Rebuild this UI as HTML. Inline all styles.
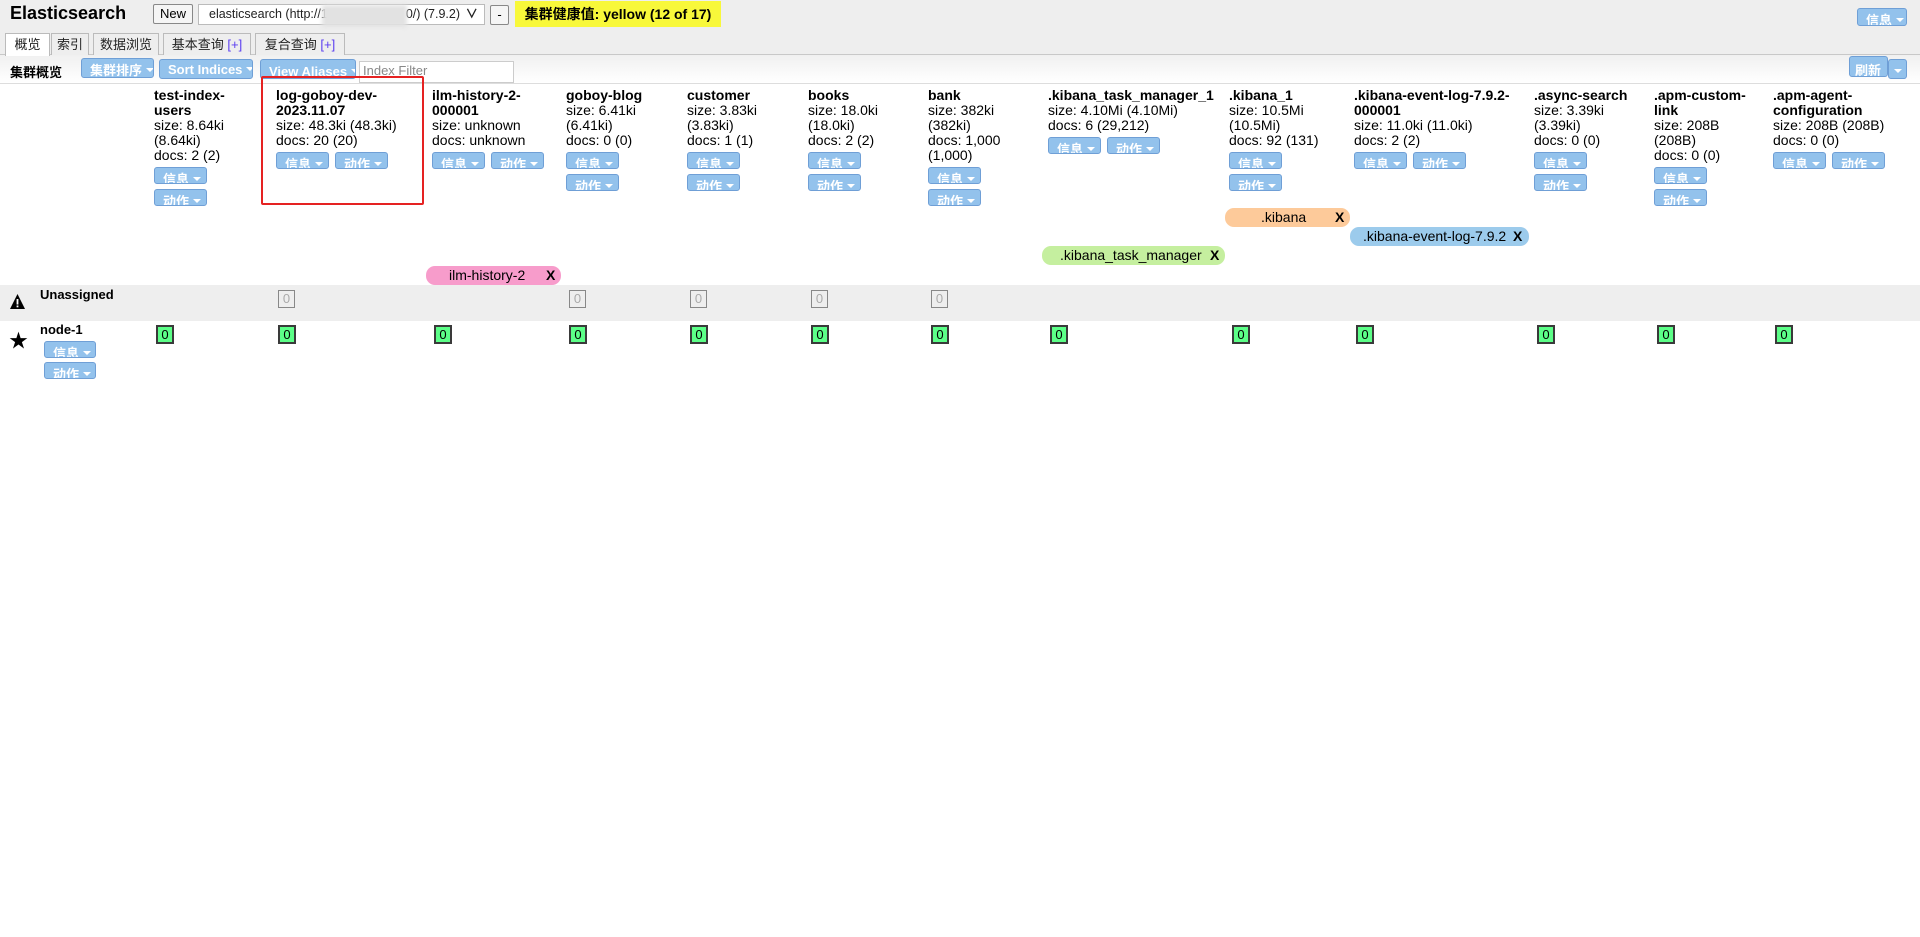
<!DOCTYPE html>
<html><head><meta charset="utf-8">
<style>
*{box-sizing:border-box;margin:0;padding:0}
body{width:1920px;height:937px;background:#fff;font-family:"Liberation Sans","Noto Sans CJK SC",sans-serif;font-size:14px;color:#000;position:relative;overflow:hidden}
.abs{position:absolute}
#hdr{left:0;top:0;width:1920px;height:55px;background:#eee;border-bottom:1px solid #c8c8c8}
#bar{left:0;top:55px;width:1920px;height:29px;background:linear-gradient(#f0f0f0,#fff);border-bottom:1px solid #ddd}
.gb{position:absolute;background:#f5f5f5;border:1px solid #888;border-radius:2px;font-size:13px;text-align:center;line-height:18px}
.tab{position:absolute;top:33px;height:22px;border:1px solid #bbb;border-bottom:none;background:#eee;font-size:13px;line-height:22px;text-align:center;color:#222}
.tab b{font-weight:normal;color:#5a3cf0}
.btn{position:absolute;height:17px;background:#93c2ec;border:1px solid #6f9fd6;border-radius:3px;color:#fff;font-size:13px;font-weight:bold;overflow:hidden;line-height:23px;padding-left:8px;white-space:nowrap}
.btn i{display:inline-block;width:0;height:0;border-left:4px solid transparent;border-right:4px solid transparent;border-top:4px solid #fff;vertical-align:3px;margin-left:4px}
.col{position:absolute;top:88px;line-height:15px;white-space:nowrap}
.col b{font-weight:bold}
.col .b{position:relative;display:block;height:17px;width:53px;margin-top:4px;background:#93c2ec;border:1px solid #6f9fd6;border-radius:3px;color:#fff;font-size:13px;font-weight:bold;overflow:hidden;line-height:23px;padding-left:8px}
.col .b+.b{margin-top:5px}
.col .row{display:flex;gap:6px;margin-top:4px}
.col .row .b{margin-top:0}
.b i{display:inline-block;width:0;height:0;border-left:4px solid transparent;border-right:4px solid transparent;border-top:4px solid #fff;vertical-align:3px;margin-left:4px}
.ua{position:absolute;top:290px;width:17px;height:18px;border:1px solid #888;color:#aaa;font-size:13px;text-align:center;line-height:16px}
.sh{position:absolute;top:325px;width:18px;height:19px;border:2px solid #3a3a3a;background:#5cff88;font-size:13px;text-align:center;line-height:15px}
.al{position:absolute;height:19px;border-radius:9px;font-size:14px;line-height:19px;white-space:nowrap}
.al span{position:absolute}
.al b{position:absolute;font-weight:bold}
</style></head><body>
<div id="hdr" class="abs"></div>
<div id="bar" class="abs"></div>
<div class="abs" style="left:10px;top:3px;font-size:18px;font-weight:bold">Elasticsearch</div>
<div class="gb" style="left:153px;top:4px;width:40px;height:20px;">New</div>
<div class="abs" style="left:198px;top:4px;width:287px;height:21px;background:#fff;border:1px solid #bbb;font-size:12.5px;line-height:19px;padding-left:10px;color:#222;white-space:nowrap">elasticsearch (http://1<span style="display:inline-block;width:78px"></span>0/) (7.9.2)<span style="position:absolute;right:6px;top:0;font-weight:bold">&#x2228;</span></div>
<div class="abs" style="left:322px;top:5px;width:85px;height:22px;background:#e2e2e2;filter:blur(2px)"></div>
<div class="gb" style="left:490px;top:5px;width:19px;height:20px;">-</div>
<div class="abs" style="left:515px;top:1px;width:206px;height:26px;background:#f8f83a;font-weight:bold;font-size:14px;line-height:26px;text-align:center">集群健康值: yellow (12 of 17)</div>
<div class="btn" style="left:1857px;top:8px;width:50px;height:18px">信息<i></i></div>

<div class="tab" style="left:5px;width:45px;background:#fff;height:23px">概览</div>
<div class="tab" style="left:51px;width:38px">索引</div>
<div class="tab" style="left:93px;width:66px">数据浏览</div>
<div class="tab" style="left:163px;width:88px">基本查询 <b>[+]</b></div>
<div class="tab" style="left:255px;width:90px">复合查询 <b>[+]</b></div>

<div class="abs" style="left:10px;top:62px;font-weight:bold;font-size:13px">集群概览</div>
<div class="btn" style="left:81px;top:58px;width:73px;height:20px;line-height:24px">集群排序<i></i></div>
<div class="btn" style="left:159px;top:59px;width:94px;height:20px;line-height:20px">Sort Indices<i></i></div>
<div class="btn" style="left:260px;top:59px;width:96px;height:20px;line-height:24px">View Aliases<i></i></div>
<div class="abs" style="left:359px;top:61px;width:155px;height:22px;background:#fff;border:1px solid #ccc;color:#888;font-size:13px;line-height:18px;padding-left:3px">Index Filter</div>
<div class="btn" style="left:1849px;top:56px;width:39px;height:21px;line-height:27px;padding-left:5px">刷新</div>
<div class="btn" style="left:1888px;top:59px;width:19px;height:20px;padding-left:5px"><i style="margin-left:0"></i></div>

<div class="col" style="left:154px"><b>test-index-<br>users</b><br>size: 8.64ki<br>(8.64ki)<br>docs: 2 (2)<div class="b">信息<i></i></div><div class="b">动作<i></i></div></div>
<div class="col" style="left:276px"><b>log-goboy-dev-<br>2023.11.07</b><br>size: 48.3ki (48.3ki)<br>docs: 20 (20)<div class="row"><div class="b">信息<i></i></div><div class="b">动作<i></i></div></div></div>
<div class="col" style="left:432px"><b>ilm-history-2-<br>000001</b><br>size: unknown<br>docs: unknown<div class="row"><div class="b">信息<i></i></div><div class="b">动作<i></i></div></div></div>
<div class="col" style="left:566px"><b>goboy-blog</b><br>size: 6.41ki<br>(6.41ki)<br>docs: 0 (0)<div class="b">信息<i></i></div><div class="b">动作<i></i></div></div>
<div class="col" style="left:687px"><b>customer</b><br>size: 3.83ki<br>(3.83ki)<br>docs: 1 (1)<div class="b">信息<i></i></div><div class="b">动作<i></i></div></div>
<div class="col" style="left:808px"><b>books</b><br>size: 18.0ki<br>(18.0ki)<br>docs: 2 (2)<div class="b">信息<i></i></div><div class="b">动作<i></i></div></div>
<div class="col" style="left:928px"><b>bank</b><br>size: 382ki<br>(382ki)<br>docs: 1,000<br>(1,000)<div class="b">信息<i></i></div><div class="b">动作<i></i></div></div>
<div class="col" style="left:1048px"><b>.kibana_task_manager_1</b><br>size: 4.10Mi (4.10Mi)<br>docs: 6 (29,212)<div class="row"><div class="b">信息<i></i></div><div class="b">动作<i></i></div></div></div>
<div class="col" style="left:1229px"><b>.kibana_1</b><br>size: 10.5Mi<br>(10.5Mi)<br>docs: 92 (131)<div class="b">信息<i></i></div><div class="b">动作<i></i></div></div>
<div class="col" style="left:1354px"><b>.kibana-event-log-7.9.2-<br>000001</b><br>size: 11.0ki (11.0ki)<br>docs: 2 (2)<div class="row"><div class="b">信息<i></i></div><div class="b">动作<i></i></div></div></div>
<div class="col" style="left:1534px"><b>.async-search</b><br>size: 3.39ki<br>(3.39ki)<br>docs: 0 (0)<div class="b">信息<i></i></div><div class="b">动作<i></i></div></div>
<div class="col" style="left:1654px"><b>.apm-custom-<br>link</b><br>size: 208B<br>(208B)<br>docs: 0 (0)<div class="b">信息<i></i></div><div class="b">动作<i></i></div></div>
<div class="col" style="left:1773px"><b>.apm-agent-<br>configuration</b><br>size: 208B (208B)<br>docs: 0 (0)<div class="row"><div class="b">信息<i></i></div><div class="b">动作<i></i></div></div></div>

<div class="abs" style="left:261px;top:76px;width:163px;height:129px;border:2px solid #e52222;border-radius:2px"></div>

<div class="al" style="left:1225px;top:208px;width:125px;background:#fdca9a"><span style="left:36px">.kibana</span><b style="left:110px">X</b></div>
<div class="al" style="left:1350px;top:227px;width:179px;background:#9ccbec"><span style="left:13px">.kibana-event-log-7.9.2</span><b style="left:163px">X</b></div>
<div class="al" style="left:1042px;top:246px;width:183px;background:#c5ef9f"><span style="left:18px">.kibana_task_manager</span><b style="left:168px">X</b></div>
<div class="al" style="left:426px;top:266px;width:135px;background:#f79ccb"><span style="left:23px">ilm-history-2</span><b style="left:120px">X</b></div>

<div class="abs" style="left:0;top:285px;width:1920px;height:36px;background:#eee"></div>
<svg class="abs" style="left:9px;top:293px" width="17" height="17" viewBox="0 0 17 17"><path d="M8.5 1 L16 16 L1 16 Z" fill="#000"/><rect x="7.6" y="6" width="1.8" height="5.5" fill="#fff"/><rect x="7.6" y="12.5" width="1.8" height="1.8" fill="#fff"/></svg>
<div class="abs" style="left:40px;top:287px;font-weight:bold;font-size:13px">Unassigned</div>
<div class="ua" style="left:278px">0</div>
<div class="ua" style="left:569px">0</div>
<div class="ua" style="left:690px">0</div>
<div class="ua" style="left:811px">0</div>
<div class="ua" style="left:931px">0</div>

<div class="abs" style="left:9px;top:326px;font-size:19px">&#9733;</div>
<div class="abs" style="left:40px;top:322px;font-weight:bold;font-size:13px">node-1</div>
<div class="btn" style="left:44px;top:341px;width:52px">信息<i></i></div>
<div class="btn" style="left:44px;top:362px;width:52px">动作<i></i></div>
<div class="sh" style="left:156px">0</div>
<div class="sh" style="left:278px">0</div>
<div class="sh" style="left:434px">0</div>
<div class="sh" style="left:569px">0</div>
<div class="sh" style="left:690px">0</div>
<div class="sh" style="left:811px">0</div>
<div class="sh" style="left:931px">0</div>
<div class="sh" style="left:1050px">0</div>
<div class="sh" style="left:1232px">0</div>
<div class="sh" style="left:1356px">0</div>
<div class="sh" style="left:1537px">0</div>
<div class="sh" style="left:1657px">0</div>
<div class="sh" style="left:1775px">0</div>
</body></html>
